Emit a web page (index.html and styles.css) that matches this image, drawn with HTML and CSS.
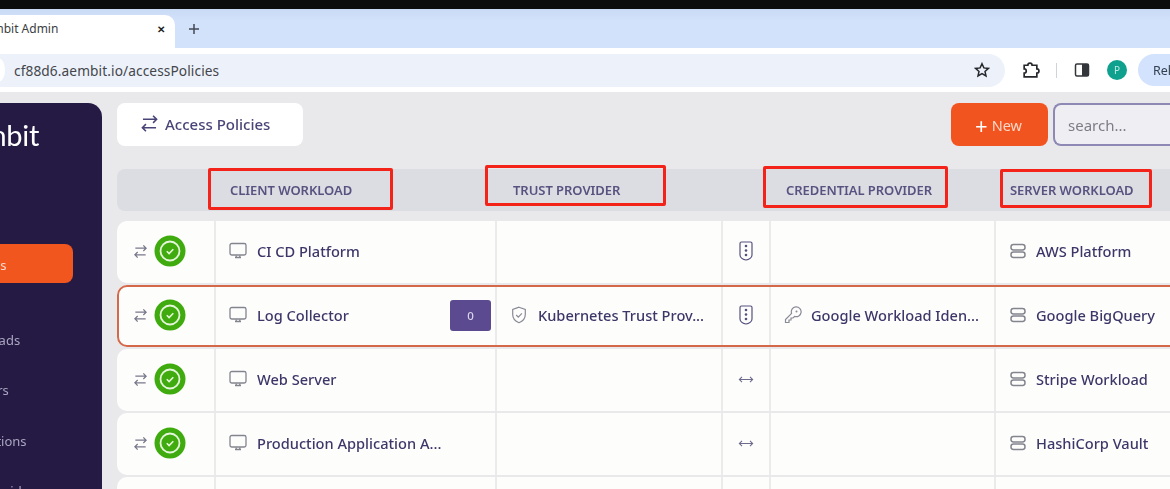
FILE: index.html
```html
<!DOCTYPE html>
<html lang="en">
<head>
<meta charset="utf-8">
<title>Aembit Admin</title>
<link rel="stylesheet" href="styles.css">
</head>
<body>
<svg class="sprites" aria-hidden="true">
  <defs>
    <symbol id="i-swap" viewBox="0 0 16 16"><path d="M14 4.500H2.500M11 1.500l3 3-3 3M2 11.500h11.500M5 8.500l-3 3 3 3" fill="none" stroke="currentColor" stroke-width="1.300"/></symbol>
    <symbol id="i-monitor" viewBox="0 0 18 18"><rect x="1" y="1.500" width="16" height="11.500" rx="1.800" fill="none" stroke="currentColor" stroke-width="1.300"/><path d="M6 15.500h6M7.200 13.500v1.500M10.800 13.500v1.500" fill="none" stroke="currentColor" stroke-width="1.300"/></symbol>
    <symbol id="i-server" viewBox="0 0 16 16"><rect x="1" y="1.500" width="14" height="5.500" rx="2.400" fill="none" stroke="currentColor" stroke-width="1.500"/><rect x="1" y="9" width="14" height="5.500" rx="2.400" fill="none" stroke="currentColor" stroke-width="1.500"/></symbol>
    <symbol id="i-light" viewBox="0 0 14 20"><path d="M2.500 1h9A1.500 1.500 0 0 1 13 2.500V14c0 2.500-3 4.500-6 5-3-.5-6-2.500-6-5V2.500A1.500 1.500 0 0 1 2.500 1z" fill="none" stroke="currentColor" stroke-width="1.200"/><circle cx="7" cy="5" r="1.300" fill="currentColor"/><circle cx="7" cy="9.500" r="1.300" fill="currentColor"/><circle cx="7" cy="14" r="1.300" fill="currentColor"/></symbol>
    <symbol id="i-both" viewBox="0 0 18 10"><path d="M1.500 5h15M4.500 2l-3 3 3 3M13.500 2l3 3-3 3" fill="none" stroke="currentColor" stroke-width="1.200"/></symbol>
    <symbol id="i-ok" viewBox="0 0 32 32"><circle cx="16" cy="16" r="15.500" fill="#3fab0e"/><circle cx="16" cy="16" r="9.500" fill="none" stroke="#e6f5dc" stroke-width="1.800"/><path d="M12.800 16.300l2.300 2.300 4.200-4.400" fill="none" stroke="#e6f5dc" stroke-width="1.600"/></symbol>
  </defs>
</svg>

<div class="screen">
  <div class="blackbar"></div>

  <div class="tabstrip">
    <div class="tab"><span class="tab-title">Aembit Admin</span><span class="tab-close">✕</span></div>
    <svg class="tab-new" viewBox="0 0 12 12"><path d="M6 1v10M1 6h10" stroke="#444a55" stroke-width="1.500" fill="none"/></svg>
  </div>

  <div class="addressbar">
    <div class="omnibox">
      <span class="site-dot"></span>
      <span class="url">cf88d6.aembit.io/accessPolicies</span>
      <svg class="star" viewBox="0 0 16 16"><path d="M8 1.700l1.900 4.200 4.500.5-3.400 3 1 4.500L8 11.600l-4 2.300 1-4.500-3.400-3 4.500-.5z" fill="none" stroke="#25272b" stroke-width="1.500"/></svg>
    </div>
    <svg class="tool puzzle" viewBox="0 0 18 18"><path d="M3 4h3.500a2 2 0 0 1 4 0H15v3.500a2 2 0 0 1 0 4V15H3v-3.500a2 2 0 0 0 0-4z" fill="none" stroke="#25272b" stroke-width="1.600"/></svg>
    <span class="tool-sep"></span>
    <svg class="tool panel" viewBox="0 0 16 16"><rect x="1.500" y="2" width="13" height="12" rx="1.500" fill="none" stroke="#33363b" stroke-width="1.500"/><rect x="8" y="2" width="6.500" height="12" fill="#33363b"/></svg>
    <span class="avatar">P</span>
    <span class="relaunch">Relaunch</span>
  </div>

  <div class="page">
    <aside class="sidebar">
      <div class="logo">aembit</div>
      <nav class="nav">
        <a class="nav-item active">Access Policies</a>
        <a class="nav-item">Client Workloads</a>
        <a class="nav-item">Trust Providers</a>
        <a class="nav-item">Access Conditions</a>
        <a class="nav-item">Credential Providers</a>
      </nav>
    </aside>

    <main class="main">
      <div class="toolbar">
        <div class="title-card">
          <svg class="title-icon"><use href="#i-swap"/></svg>
          <span>Access Policies</span>
        </div>
        <button class="new-btn"><span class="plus">+</span> New</button>
        <div class="search">search...</div>
      </div>

      <div class="thead">
        <div></div>
        <div class="th th-client">CLIENT WORKLOAD</div>
        <div class="th th-trust">TRUST PROVIDER</div>
        <div></div>
        <div class="th th-cred">CREDENTIAL PROVIDER</div>
        <div class="th th-server">SERVER WORKLOAD</div>
      </div>

      <div class="rows">
        <div class="row">
          <div class="cell status"><svg class="swap"><use href="#i-swap"/></svg><svg class="ok"><use href="#i-ok"/></svg></div>
          <div class="cell"><svg class="ic"><use href="#i-monitor"/></svg><span>CI CD Platform</span></div>
          <div class="cell"></div>
          <div class="cell link"><svg class="light"><use href="#i-light"/></svg></div>
          <div class="cell"></div>
          <div class="cell"><svg class="ic srv"><use href="#i-server"/></svg><span>AWS Platform</span></div>
        </div>

        <div class="row selected">
          <div class="cell status"><svg class="swap"><use href="#i-swap"/></svg><svg class="ok"><use href="#i-ok"/></svg></div>
          <div class="cell"><svg class="ic"><use href="#i-monitor"/></svg><span>Log Collector</span><span class="badge">0</span></div>
          <div class="cell">
            <svg class="ic" viewBox="0 0 16 18"><path d="M8 1.200l6.300 2.300v5c0 3.800-2.700 6.800-6.300 8.200-3.600-1.400-6.300-4.400-6.300-8.200v-5z" fill="none" stroke="#8a8a96" stroke-width="1.200"/><path d="M5.200 9l2.100 2.100 3.600-3.800" fill="none" stroke="#8a8a96" stroke-width="1.200"/></svg>
            <span>Kubernetes Trust Prov...</span>
          </div>
          <div class="cell link"><svg class="light"><use href="#i-light"/></svg></div>
          <div class="cell">
            <svg class="ic" viewBox="0 0 18 18"><path d="M1.500 16.500v-3l6.100-6.100a4.900 4.900 0 1 1 3 3l-1.600 1.600H7v2H5v2.500z" fill="none" stroke="#8a8a96" stroke-width="1.200"/><circle cx="12.500" cy="5.500" r="1" fill="#8a8a96"/></svg>
            <span class="cred-name">Google Workload Iden...</span>
          </div>
          <div class="cell"><svg class="ic srv"><use href="#i-server"/></svg><span>Google BigQuery</span></div>
        </div>

        <div class="row">
          <div class="cell status"><svg class="swap"><use href="#i-swap"/></svg><svg class="ok"><use href="#i-ok"/></svg></div>
          <div class="cell"><svg class="ic"><use href="#i-monitor"/></svg><span>Web Server</span></div>
          <div class="cell"></div>
          <div class="cell link"><svg class="both"><use href="#i-both"/></svg></div>
          <div class="cell"></div>
          <div class="cell"><svg class="ic srv"><use href="#i-server"/></svg><span>Stripe Workload</span></div>
        </div>

        <div class="row">
          <div class="cell status"><svg class="swap"><use href="#i-swap"/></svg><svg class="ok"><use href="#i-ok"/></svg></div>
          <div class="cell"><svg class="ic"><use href="#i-monitor"/></svg><span>Production Application A...</span></div>
          <div class="cell"></div>
          <div class="cell link"><svg class="both"><use href="#i-both"/></svg></div>
          <div class="cell"></div>
          <div class="cell"><svg class="ic srv"><use href="#i-server"/></svg><span>HashiCorp Vault</span></div>
        </div>

        <div class="row">
          <div class="cell status"></div>
          <div class="cell"></div>
          <div class="cell"></div>
          <div class="cell link"></div>
          <div class="cell"></div>
          <div class="cell"></div>
        </div>
      </div>
    </main>
  </div>

  <div class="mark mark-client"></div>
  <div class="mark mark-trust"></div>
  <div class="mark mark-cred"></div>
  <div class="mark mark-server"></div>
</div>
</body>
</html>
```

FILE: styles.css
```css
* { box-sizing: border-box; }
html, body { margin: 0; padding: 0; height: 489px; overflow: hidden; background: #e9e9ec; }
body { font-family: "Noto Sans", "Liberation Sans", sans-serif; color: #413b6e; }
.sprites { position: absolute; width: 0; height: 0; }

.screen { position: relative; width: 1170px; height: 489px; overflow: hidden; display: flex; flex-direction: column; filter: blur(0.4px); }

.blackbar { height: 9px; background: #0b0d0c; flex: none; }

.tabstrip { height: 39px; flex: none; background: linear-gradient(#c9daf5, #d3e2fb 30%); display: flex; align-items: flex-end; }
.tab { width: 207px; flex: none; height: 33px; margin-left: -32px; background: #fff; border-radius: 0 10px 0 0; display: flex; align-items: center; padding: 0 10px 6px 10px; justify-content: space-between; font-size: 12px; color: #3c4043; }
.tab-title { white-space: nowrap; }
.tab-close { font-size: 10px; color: #1f1f1f; font-weight: 700; }
.tab-new { width: 12px; height: 12px; flex: none; margin: 0 0 13px 13px; }

.addressbar { height: 44px; flex: none; background: #fff; display: flex; align-items: center; }
.omnibox { width: 1005px; flex: none; height: 33px; background: #edf2fa; border-radius: 0 17px 17px 0; display: flex; align-items: center; position: relative; }
.site-dot { width: 14px; height: 24px; margin-left: -9px; background: #fff; border-radius: 50%; flex: none; }
.url { margin-left: 9px; font-size: 13.700px; letter-spacing: 0.1px; color: #44464c; white-space: nowrap; }
.star { width: 16px; height: 16px; margin-left: auto; margin-right: 15px; flex: none; }
.tool { flex: none; }
.puzzle { width: 19px; height: 19px; margin-left: 16px; }
.tool-sep { width: 1px; height: 15px; background: #cfd3da; margin-left: 16px; flex: none; }
.panel { width: 16px; height: 16px; margin-left: 17px; }
.avatar { width: 20px; height: 20px; border-radius: 50%; background: #10a08e; color: #bfe9e2; font-size: 10px; display: flex; align-items: center; justify-content: center; margin-left: 17px; flex: none; }
.relaunch { margin-left: 11px; height: 32px; padding: 0 20px 0 15px; background: #d3e3fd; border-radius: 16px 0 0 16px; font-size: 12.500px; color: #33404f; display: flex; align-items: center; white-space: nowrap; flex: none; }

.page { flex: 1; display: flex; padding-top: 11px; min-height: 0; }

.sidebar { width: 202px; margin-left: -100px; flex: none; background: #241a43; border-radius: 14px 14px 0 0; color: #b3aec6; }
.logo { font-family: "Lato", sans-serif; font-size: 29px; font-weight: 400; color: #fff; text-align: right; padding: 13px 63px 0 0; line-height: 38px; letter-spacing: -0.3px; }
.nav { display: flex; flex-direction: column; gap: 10.500px; margin-top: 90px; padding-right: 29px; font-size: 13px; }
.nav-item { height: 40px; display: flex; align-items: center; padding: 2px 0 0 17px; white-space: nowrap; color: #aaa5c0; }
.nav-item.active { background: #f2561f; color: #f6ddd0; border-radius: 8px; margin-bottom: 25px; height: 39px; }

.main { flex: 1; min-width: 0; padding-left: 15px; }

.toolbar { display: flex; height: 43px; align-items: stretch; }
.title-card { width: 186px; background: #fff; border-radius: 8px; display: flex; align-items: center; padding: 0 0 2px 23px; gap: 6px; font-size: 15px; font-weight: 500; color: #4a4578; }
.title-icon { width: 19px; height: 19px; color: #4a4578; }
.new-btn { margin-left: auto; width: 97px; background: #f2541f; border: 0; border-radius: 8px; color: #f9d8c8; font: inherit; font-size: 14.500px; display: flex; align-items: center; justify-content: center; gap: 4px; padding: 0 2px 0 0; }
.plus { font-size: 22px; line-height: 1; color: #fff; }
.search { width: 117px; margin-left: 5px; background: #efeff3; border: 2px solid #8d89b4; border-right: 0; border-radius: 8px 0 0 8px; font-size: 15px; color: #7d7c88; display: flex; align-items: center; padding-left: 13px; }

.thead, .row { display: grid; grid-template-columns: 97px 281px 226px 48px 225px 196px; width: 1073px; }
.thead { height: 42px; margin-top: 23px; background: #dcdce3; border-radius: 8px 0 0 8px; align-items: center; font-size: 13px; font-weight: 600; color: #57527f; white-space: nowrap; }
.th { padding-bottom: 1px; letter-spacing: -0.05px; }
.th-client { padding-left: 16px; }
.th-trust { padding-left: 18px; }
.th-cred { padding-left: 17px; }
.th-server { padding-left: 16px; }

.rows { display: flex; flex-direction: column; gap: 2px; margin-top: 10px; }
.row { height: 62px; background: #fdfefc; border-radius: 10px 0 0 10px; font-size: 14.600px; font-weight: 500; color: #3d3769; }
.row.selected { box-shadow: inset 0 0 0 2px #d4684a; }
.row .cell { border-left: 2px solid #ebebec; display: flex; align-items: center; padding: 0 0 2px 13px; gap: 10px; white-space: nowrap; min-width: 0; }
.row .cell:first-child { border-left: 0; padding-left: 16px; gap: 6px; }
.row .cell.link { padding-left: 0; justify-content: center; }
.row.selected .cell { margin: 2px 0; }

.swap { width: 15px; height: 15px; color: #77778a; flex: none; }
.ok { width: 32px; height: 32px; flex: none; }
.ic { width: 18px; height: 18px; color: #84848f; flex: none; }
.ic.srv { width: 16px; height: 16px; margin-left: 1px; }
.cred-name { margin-left: -1px; }
.light { width: 14px; height: 20px; color: #55507f; }
.both { width: 16px; height: 9px; color: #6e6b8c; }
.badge { margin-left: auto; margin-right: 4px; width: 41px; height: 31px; background: #5b4a8f; color: #d9d4ea; border-radius: 3px; font-size: 11.500px; display: flex; align-items: center; justify-content: center; }

.mark { position: absolute; border: 3px solid #f3231a; border-radius: 2px; }
.mark-client { left: 208px; top: 168px; width: 185px; height: 42px; }
.mark-trust { left: 485px; top: 165px; width: 181px; height: 41px; }
.mark-cred { left: 763px; top: 166px; width: 185px; height: 42px; }
.mark-server { left: 1000px; top: 169px; width: 152px; height: 39px; }
```
